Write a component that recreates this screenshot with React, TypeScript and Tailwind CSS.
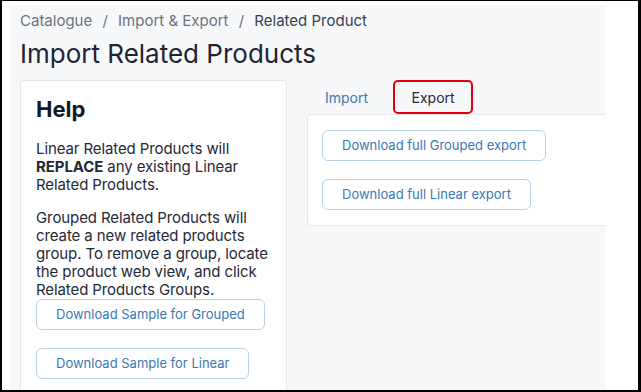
import React from "react";

const font = { fontFamily: "Inter, 'Noto Sans', sans-serif" };

function OutlineButton({ children }: { children: React.ReactNode }) {
  return (
    <button className="h-[31px] px-[19px] rounded-[6px] border border-[#b9d1e6] bg-white text-[13px] text-[#3a78b6] leading-none whitespace-nowrap">
      {children}
    </button>
  );
}

export default function App() {
  return (
    <div
      className="w-[641px] h-[392px] bg-white border-l-2 border-t border-r-[3px] border-b-2 border-black overflow-hidden flex"
      style={font}
    >
      <div className="ml-[8px] mt-[5px] w-[595px] bg-[#f7f8fa] pl-[10px] overflow-hidden">
        <div className="pt-[5px] text-[15px] leading-[20px] text-[#6b7280] whitespace-nowrap">
          Catalogue <span className="mx-[6px]">/</span> Import &amp; Export{" "}
          <span className="mx-[6px]">/</span> <span className="text-[#374151]">Related Product</span>
        </div>
        <h1 className="mt-[8px] text-[26px] leading-[30px] text-[#1f2433] font-normal whitespace-nowrap">
          Import Related Products
        </h1>
        <div className="mt-[11px] flex gap-[20px] items-start">
          <div className="w-[267px] shrink-0 h-[330px] bg-white border border-[#e5e7eb] rounded-t-[3px] pl-[15px] pr-[8px] pt-[14px]">
            <h2 className="text-[22px] leading-[28px] font-bold text-[#111827]">Help</h2>
            <p className="mt-[17px] text-[15px] leading-[18px] tracking-[-0.1px] text-[#1f2937]">
              Linear Related Products will <b className="font-bold">REPLACE</b> any existing Linear
              <br />
              Related Products.
            </p>
            <p className="mt-[15px] text-[15px] leading-[18px] tracking-[-0.1px] text-[#1f2937]">
              Grouped Related Products will create a new related products group. To remove a group, locate the product web view, and click Related Products Groups.
            </p>
            <div className="mt-0 flex flex-col items-start gap-[18px]">
              <OutlineButton>Download Sample for Grouped</OutlineButton>
              <OutlineButton>Download Sample for Linear</OutlineButton>
            </div>
          </div>
          <div className="flex-1 min-w-[320px] flex flex-col">
            <div className="flex items-end h-[34px]">
              <div className="px-[18px] h-[34px] flex items-center text-[14px] text-[#3a78b6]">Import</div>
              <div className="ml-[7px] w-[80px] h-[34px] flex items-center justify-center border-2 border-[#e0000f] rounded-[5px] text-[14px] text-[#1f2937]">
                Export
              </div>
            </div>
            <div className="w-[320px] bg-white border border-[#e5e7eb] border-r-0 rounded-l-[4px] px-[14px] pt-[15px] pb-[15px] flex flex-col items-start gap-[18px]">
              <OutlineButton>Download full Grouped export</OutlineButton>
              <OutlineButton>Download full Linear export</OutlineButton>
            </div>
          </div>
        </div>
      </div>
    </div>
  );
}
